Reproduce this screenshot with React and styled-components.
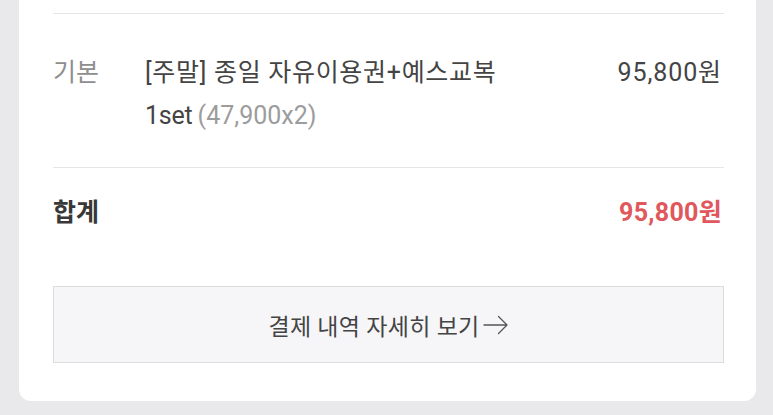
import React from "react";
import styled, { createGlobalStyle } from "styled-components";

const GlobalStyle = createGlobalStyle`
  html, body {
    margin: 0;
    padding: 0;
    background: #e9e9ec;
  }
  body {
    font-family: "Roboto", "Noto Sans CJK KR", sans-serif;
    -webkit-font-smoothing: antialiased;
  }
`;

const items = [
  {
    type: "기본",
    name: "[주말] 종일 자유이용권+예스교복",
    qty: "1set",
    detail: "(47,900x2)",
    price: "95,800원",
  },
];

const App = () => {
  return (
    <Page>
      <GlobalStyle />
      <Card>
        {items.map((item, index) => (
          <ItemRow key={index}>
            <TypeLabel>{item.type}</TypeLabel>
            <ItemInfo>
              <ItemName>{item.name}</ItemName>
              <ItemQty>
                {item.qty}
                <ItemDetail>{item.detail}</ItemDetail>
              </ItemQty>
            </ItemInfo>
            <ItemPrice>{item.price}</ItemPrice>
          </ItemRow>
        ))}
        <TotalRow>
          <TotalLabel>합계</TotalLabel>
          <TotalPrice>95,800원</TotalPrice>
        </TotalRow>
        <DetailButton type="button">
          결제 내역 자세히 보기
          <svg width="26" height="22" viewBox="0 0 26 22" fill="none">
            <path d="M1 11H24M15.5 2.5L24 11L15.5 19.5" stroke="#555" strokeWidth="1.3" strokeLinecap="round" strokeLinejoin="round" />
          </svg>
        </DetailButton>
      </Card>
    </Page>
  );
};

const Page = styled.div`
  padding: 0 17px 15px 19px;
`;

const Card = styled.div`
  background: #fff;
  border-radius: 0 0 12px 12px;
  padding: 13px 32px 38px 34px;
  display: flex;
  flex-direction: column;
`;

const ItemRow = styled.div`
  display: flex;
  align-items: flex-start;
  border-top: 1px solid #e6e6e8;
  border-bottom: 1px solid #e6e6e8;
  padding: 37px 2px 30px 0;
  line-height: 43px;
  font-size: 25px;
`;

const TypeLabel = styled.div`
  width: 92px;
  flex-shrink: 0;
  color: #8e8e8e;
`;

const ItemInfo = styled.div`
  flex: 1;
`;

const ItemName = styled.div`
  color: #444;
  letter-spacing: 0.7px;
`;

const ItemQty = styled.div`
  color: #444;
  letter-spacing: -0.2px;
`;

const ItemDetail = styled.span`
  margin-left: 5px;
  color: #9c9c9c;
  letter-spacing: 0;
`;

const ItemPrice = styled.div`
  color: #444;
  letter-spacing: 0.9px;
`;

const TotalRow = styled.div`
  display: flex;
  justify-content: space-between;
  align-items: center;
  padding: 23px 2px 0 0;
  line-height: 43px;
  font-size: 25px;
  font-weight: 700;
`;

const TotalLabel = styled.div`
  color: #383838;
`;

const TotalPrice = styled.div`
  color: #e0575c;
  letter-spacing: 0.3px;
`;

const DetailButton = styled.button`
  margin-top: 52px;
  height: 77px;
  border: 1px solid #dcdcdf;
  background: #f6f6f8;
  display: flex;
  align-items: center;
  justify-content: center;
  gap: 3px;
  font-family: "Roboto", "Noto Sans CJK KR", sans-serif;
  font-size: 23px;
  letter-spacing: 0.3px;
  color: #444;
  padding: 0;
  cursor: pointer;

  svg {
    margin-top: 1px;
  }
`;

export default App;
